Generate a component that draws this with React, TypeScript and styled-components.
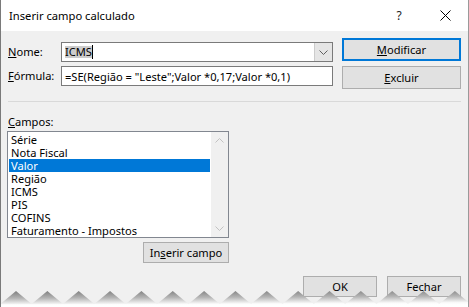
import React from 'react';
import styled, { createGlobalStyle } from 'styled-components';

const Global = createGlobalStyle`
  html, body { margin: 0; padding: 0; background: #ffffff; }
  body { font-family: "Noto Sans", "Open Sans", sans-serif; font-size: 11.1px; color: #000; }
  * { box-sizing: border-box; }
`;

const Window = styled.div`
  position: relative;
  width: 469px;
  height: 307px;
  background: #f0f0f0;
  border-left: 1px solid #7a7a7a;
  border-right: 1px solid #9a9a9a;
  overflow: hidden;
  display: flex;
  flex-direction: column;
`;

const TitleBar = styled.div`
  height: 31px;
  flex-shrink: 0;
  background: #ffffff;
  display: flex;
  align-items: center;
  padding-left: 8px;
`;

const Title = styled.span`
  flex: 1;
  font-size: 11.2px;
`;

const TitleButton = styled.div`
  width: 46px;
  height: 31px;
  display: flex;
  align-items: center;
  justify-content: center;
  font-size: 12px;
  color: #222;
`;

const Body = styled.div`
  flex: 1;
  display: flex;
  flex-direction: column;
  padding: 7px 7px 0 7px;
`;

const TopSection = styled.div`
  display: flex;
`;

const FormColumn = styled.div`
  display: flex;
  flex-direction: column;
  gap: 4px;
  margin-top: 4px;
`;

const FieldRow = styled.div`
  display: flex;
  align-items: center;
`;

const Label = styled.span`
  width: 53px;
  line-height: 16px;
`;

const Input = styled.div`
  position: relative;
  width: 272px;
  height: 20px;
  background: #ffffff;
  border: 1px solid #7a7a7a;
  display: flex;
  align-items: center;
  padding-left: 3px;
  white-space: nowrap;
  overflow: hidden;
`;

const Selection = styled.span`
  background: #cccccc;
  line-height: 12px;
`;

const Caret = styled.span`
  display: inline-block;
  width: 1px;
  height: 14px;
  background: #000;
`;

const DropButton = styled.div`
  margin-left: auto;
  width: 18px;
  height: 18px;
  background: #e5e5e5;
  border-left: 1px solid #cccccc;
  display: flex;
  align-items: center;
  justify-content: center;
`;

const ButtonColumn = styled.div`
  display: flex;
  flex-direction: column;
  gap: 5px;
  margin-left: 9px;
`;

const Button = styled.div<{ $w: number; $h: number; $default?: boolean }>`
  width: ${(p) => p.$w}px;
  height: ${(p) => p.$h}px;
  background: #e1e1e1;
  border: ${(p) => (p.$default ? '2px solid #0078d7' : '1px solid #adadad')};
  display: flex;
  align-items: center;
  justify-content: center;
  line-height: 14px;
`;

const Separator = styled.div`
  height: 1px;
  background: #d9d9d9;
  margin-top: 12px;
`;

const CamposLabel = styled.div`
  line-height: 16px;
  margin-top: 12px;
`;

const FieldsArea = styled.div`
  width: 222px;
  margin-left: -1px;
  margin-top: 1px;
  display: flex;
  flex-direction: column;
  align-items: flex-end;
  gap: 4px;
`;

const ListBox = styled.div`
  width: 222px;
  height: 107px;
  background: #ffffff;
  border: 1px solid #828790;
  display: flex;
`;

const ListItems = styled.div`
  flex: 1;
  padding: 1px;
  display: flex;
  flex-direction: column;
`;

const ListItem = styled.div<{ $selected?: boolean }>`
  height: 13px;
  line-height: 13px;
  padding-left: 2px;
  white-space: nowrap;
  background: ${(p) => (p.$selected ? '#0078d7' : 'transparent')};
  color: ${(p) => (p.$selected ? '#ffffff' : '#000000')};
`;

const ScrollBar = styled.div`
  width: 17px;
  background: #f0f0f0;
  display: flex;
  flex-direction: column;
  justify-content: space-between;
`;

const ScrollArrow = styled.div`
  height: 17px;
  display: flex;
  align-items: center;
  justify-content: center;
`;

const Footer = styled.div`
  display: flex;
  justify-content: flex-end;
  gap: 10px;
  margin-top: 13px;
`;

const TornEdge = styled.svg`
  position: absolute;
  left: 0;
  bottom: 0;
  pointer-events: none;
`;

const Chevron = ({ up, color }: { up?: boolean; color: string }) => (
  <svg width="9" height="5" viewBox="0 0 9 5">
    <polyline
      points={up ? '0.5,4.5 4.5,0.5 8.5,4.5' : '0.5,0.5 4.5,4.5 8.5,0.5'}
      fill="none"
      stroke={color}
      strokeWidth="1"
    />
  </svg>
);

const zigzag = (() => {
  const P = 31.35;
  const tipY = 1;
  const valleyY = 14;
  let d = `M0 ${valleyY - 0.68 * (13 / 15.68)}`;
  for (let i = 0; i < 16; i++) {
    const peak = 15 + i * P;
    d += ` L${peak.toFixed(2)} ${tipY} L${(peak + P / 2).toFixed(2)} ${valleyY}`;
  }
  d += ' L469 17 L0 17 Z';
  return d;
})();

const fields = ['Série', 'Nota Fiscal', 'Valor', 'Região', 'ICMS', 'PIS', 'COFINS', 'Faturamento - Impostos'];

export default function App() {
  return (
    <>
      <Global />
      <Window>
        <TitleBar>
          <Title>Inserir campo calculado</Title>
          <TitleButton>?</TitleButton>
          <TitleButton>
            <svg width="11" height="11" viewBox="0 0 11 11">
              <path d="M0.5 0.5 L10.5 10.5 M10.5 0.5 L0.5 10.5" stroke="#000" strokeWidth="1" />
            </svg>
          </TitleButton>
        </TitleBar>
        <Body>
          <TopSection>
            <FormColumn>
              <FieldRow>
                <Label>
                  <u>N</u>ome:
                </Label>
                <Input>
                  <Selection>ICMS</Selection>
                  <Caret />
                  <DropButton>
                    <Chevron color="#606060" />
                  </DropButton>
                </Input>
              </FieldRow>
              <FieldRow>
                <Label>
                  <u>F</u>órmula:
                </Label>
                <Input>=SE(Região = "Leste";Valor *0,17;Valor *0,1)</Input>
              </FieldRow>
            </FormColumn>
            <ButtonColumn>
              <Button $w={119} $h={23} $default>
                <span>
                  <u>M</u>odificar
                </span>
              </Button>
              <Button $w={119} $h={23}>
                <span>
                  <u>E</u>xcluir
                </span>
              </Button>
            </ButtonColumn>
          </TopSection>
          <Separator />
          <CamposLabel>
            <u>C</u>ampos:
          </CamposLabel>
          <FieldsArea>
            <ListBox>
              <ListItems>
                {fields.map((f) => (
                  <ListItem key={f} $selected={f === 'Valor'}>
                    {f}
                  </ListItem>
                ))}
              </ListItems>
              <ScrollBar>
                <ScrollArrow>
                  <Chevron up color="#c2c2c2" />
                </ScrollArrow>
                <ScrollArrow>
                  <Chevron color="#c2c2c2" />
                </ScrollArrow>
              </ScrollBar>
            </ListBox>
            <Button $w={86} $h={21}>
              <span>
                In<u>s</u>erir campo
              </span>
            </Button>
          </FieldsArea>
          <Footer>
            <Button $w={74} $h={21}>OK</Button>
            <Button $w={74} $h={21}>Fechar</Button>
          </Footer>
        </Body>
        <TornEdge width="469" height="17" viewBox="0 0 469 17">
          <defs>
            <linearGradient id="shade" x1="0" y1="0" x2="0.15" y2="1">
              <stop offset="0" stopColor="#7e7e7e" />
              <stop offset="0.45" stopColor="#b5b5b5" />
              <stop offset="0.85" stopColor="#fbfbfb" />
              <stop offset="1" stopColor="#ffffff" />
            </linearGradient>
          </defs>
          <path d={zigzag} fill="url(#shade)" />
          <rect x="0" y="14.5" width="469" height="3" fill="#ffffff" />
        </TornEdge>
      </Window>
    </>
  );
}
